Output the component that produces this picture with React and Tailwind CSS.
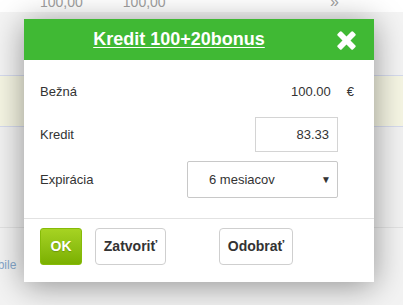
// Kredit modal over a dimmed list page
const CloseIcon = () => (
  <svg width="19" height="19" viewBox="0 0 20 20" aria-hidden="true">
    <g fill="#fff">
      <rect x="7" y="-1.5" width="6" height="23" rx="1.5" transform="rotate(45 10 10)" />
      <rect x="7" y="-1.5" width="6" height="23" rx="1.5" transform="rotate(-45 10 10)" />
    </g>
  </svg>
);

const Background = () => (
  <div className="flex flex-col h-full">
    <div className="h-[12px] overflow-hidden relative">
      <div className="flex items-end h-[12px] text-[14px] leading-[14px] text-[#a0a0a0] -mt-[3px]">
        <span className="ml-[40px]">100,00</span>
        <span className="ml-[40px]">100,00</span>
        <span className="ml-auto mr-[64px] text-[16px]">»</span>
      </div>
    </div>
    <div className="h-[63px] bg-[#f4f4f4]" />
    <div className="h-[52px] bg-[#f6f6e4] border-y border-[#d6dbee]" />
    <div className="h-[101px] bg-[#f2f2f2] border-b border-[#e2e2e2]" />
    <div className="flex-1 bg-[#f3f3f3] pt-[28px]">
      <span className="block -ml-[19px] text-[12px] text-[#86a8cc]">mobile</span>
    </div>
  </div>
);

const Modal = () => (
  <div className="absolute left-[24px] top-[19px] w-[350px] bg-white shadow-[0_4px_30px_rgba(0,0,0,0.4)]">
    <div className="h-[41px] bg-[#40b934] flex items-center justify-center relative pr-[40px]">
      <span className="text-white font-bold text-[18px] underline underline-offset-[2px]">
        Kredit 100+20bonus
      </span>
      <span className="absolute right-[18px] top-[12px] flex">
        <CloseIcon />
      </span>
    </div>
    <div className="px-[16px] pt-[14px] pb-[20px] text-[13px] text-[#333]">
      <div className="flex items-center h-[36px]">
        <span>Bežná</span>
        <span className="ml-auto">100.00</span>
        <span className="ml-[16px] mr-[4px]">€</span>
      </div>
      <div className="flex items-center h-[35px] mt-[7px]">
        <span>Kredit</span>
        <div className="ml-auto w-[83px] h-[35px] border border-[#d4d4d4] flex items-center justify-end pr-[8px] mr-[20px]">
          83.33
        </div>
      </div>
      <div className="flex items-center h-[37px] mt-[9px]">
        <span>Expirácia</span>
        <div className="ml-auto w-[151px] h-[37px] border border-[#c8c8c8] rounded-[2px] flex items-center pl-[21px] pr-[6px] mr-[20px]">
          <span>6 mesiacov</span>
          <span className="ml-auto text-[10px]">▼</span>
        </div>
      </div>
    </div>
    <div className="border-t border-[#e2e2e2] px-[16px] pt-[9px] pb-[17px] flex items-center">
      <button className="w-[42px] h-[37px] rounded-[3px] bg-gradient-to-b from-[#a6d322] to-[#7bb000] border border-[#86bb08] text-white font-bold text-[14px] [text-shadow:0_1px_1px_rgba(0,0,0,0.2)]">
        OK
      </button>
      <button className="ml-[13px] w-[71px] h-[37px] rounded-[4px] border border-[#cfcfcf] bg-white text-[#333] font-bold text-[14px]">
        Zatvoriť
      </button>
      <button className="ml-[53px] w-[74px] h-[37px] rounded-[4px] border border-[#cfcfcf] bg-white text-[#333] font-bold text-[14px]">
        Odobrať
      </button>
    </div>
  </div>
);

export default function App() {
  return (
    <div className="relative w-[403px] h-[305px] overflow-hidden bg-white font-['Liberation_Sans',Arial,sans-serif]">
      <Background />
      <Modal />
    </div>
  );
}
